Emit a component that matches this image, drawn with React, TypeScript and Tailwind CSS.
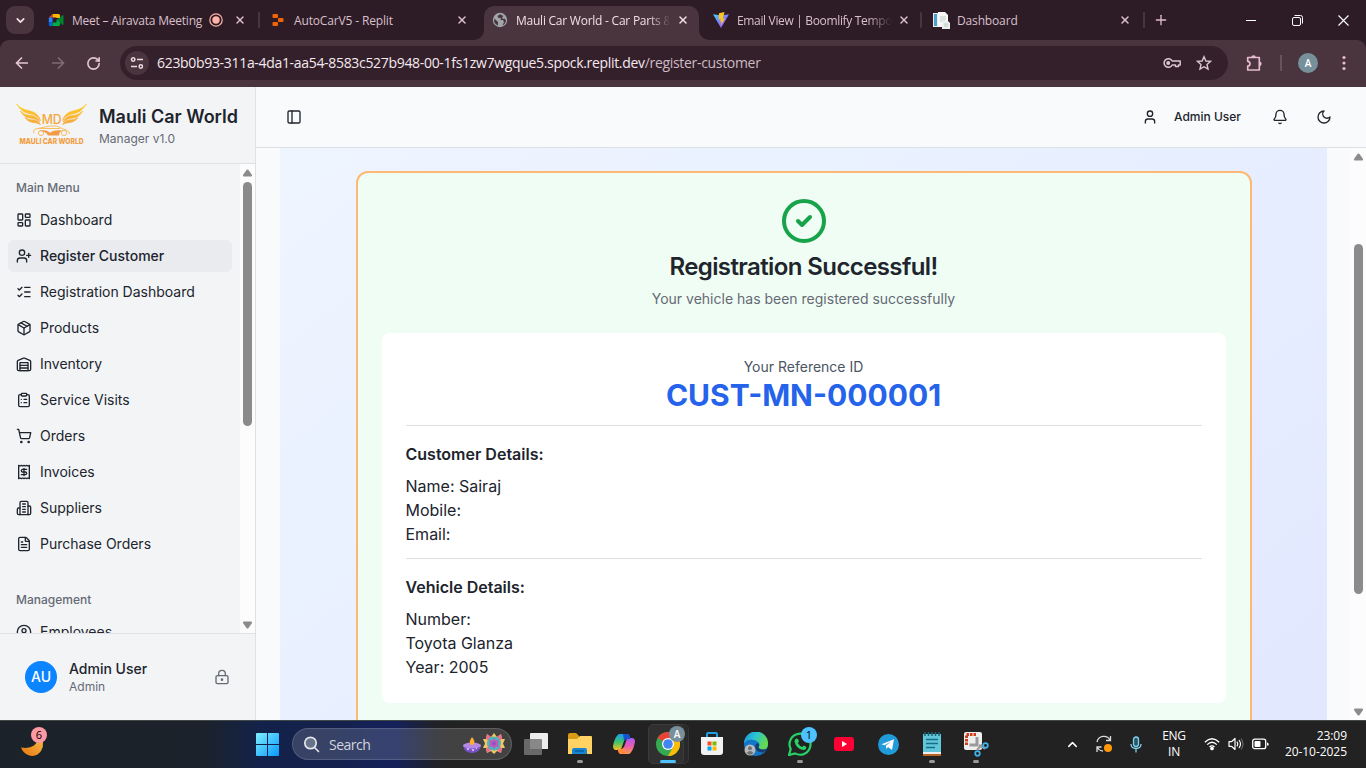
import React from "react";
import { LayoutDashboard, UserPlus, ListChecks, Package, ClipboardList, ShoppingCart, FileText, CircleUser, LockKeyhole, User, Bell, PanelLeft, CircleCheck, X, Plus, ChevronDown, ChevronUp, RotateCw } from "lucide-react";

const ui = "font-['Open_Sans','Noto_Sans',sans-serif]";

function Stroke({ size = 16, children }: { size?: number; children: React.ReactNode }) {
  return (
    <svg width={size} height={size} viewBox="0 0 24 24" fill="none" stroke="currentColor" strokeWidth="2" strokeLinecap="round" strokeLinejoin="round" className="shrink-0">
      {children}
    </svg>
  );
}

const Warehouse = () => (
  <Stroke>
    <path d="M22 8.35V20a2 2 0 0 1-2 2H4a2 2 0 0 1-2-2V8.35A2 2 0 0 1 3.26 6.5l8-3.2a2 2 0 0 1 1.48 0l8 3.2A2 2 0 0 1 22 8.35Z" />
    <path d="M6 18h12M6 14h12" />
    <rect width="12" height="12" x="6" y="10" />
  </Stroke>
);
const Receipt = () => (
  <Stroke>
    <path d="M4 2v20l2-1 2 1 2-1 2 1 2-1 2 1 2-1 2 1V2l-2 1-2-1-2 1-2-1-2 1-2-1-2 1Z" />
    <path d="M16 8h-6a2 2 0 1 0 0 4h4a2 2 0 1 1 0 4H8M12 17.5v-11" />
  </Stroke>
);
const Building = () => (
  <Stroke>
    <path d="M6 22V4a2 2 0 0 1 2-2h8a2 2 0 0 1 2 2v18Z" />
    <path d="M6 12H4a2 2 0 0 0-2 2v6a2 2 0 0 0 2 2h2M18 9h2a2 2 0 0 1 2 2v9a2 2 0 0 1-2 2h-2M10 6h4M10 10h4M10 14h4M10 18h4" />
  </Stroke>
);

/* ---------- Browser chrome ---------- */

function MeetIcon() {
  return (
    <svg width="16" height="16" viewBox="0 0 16 16">
      <path d="M4.5 2H10.5Q12 2 12 3.500V6H8.500V5.500H4.500Z" fill="#ffba00" />
      <path d="M4.5 2V5.500H.8Z" fill="#ea4335" />
      <path d="M.8 5.500H4.500V10.500H.8Z" fill="#2684fc" />
      <path d="M.8 10.500H4.500V14H2Q.8 14 .8 12.800Z" fill="#0066da" />
      <path d="M4.500 10.500H8.500V8L12 6V12.500Q12 14 10.500 14H4.500Z" fill="#00ac47" />
      <path d="M9 8L14.500 3.200Q15.500 2.800 15.500 3.800V12.200Q15.500 13.200 14.500 12.800Z" fill="#00832d" />
    </svg>
  );
}
function ReplitIcon() {
  return (
    <svg width="16" height="16" viewBox="0 0 16 16" fill="#f26207">
      <rect x="2.500" y="2" width="5.500" height="4" rx="1" />
      <rect x="8" y="6" width="5.500" height="4" rx="1" />
      <rect x="2.500" y="10" width="5.500" height="4" rx="1" />
    </svg>
  );
}
function GlobeIcon() {
  return (
    <svg width="16" height="16" viewBox="0 0 16 16">
      <circle cx="8" cy="8" r="7.200" fill="#a0a5a9" />
      <path d="M2.500 6.500L6 10v3.500Q3 12.500 2 9.500ZM8 2.200L5.500 4 6.500 6H9l-.5 2H11l1 2-1.500 3.500Q13.800 11.500 14 8L12.500 6.500 11 7 10 5.500 11.500 4Z" fill="#4a353f" />
    </svg>
  );
}
function ViteIcon() {
  return (
    <svg width="16" height="16" viewBox="0 0 16 16">
      <defs>
        <linearGradient id="vite" x1="0" y1="0" x2="1" y2="1">
          <stop offset="0" stopColor="#41d1ff" />
          <stop offset="1" stopColor="#bd34fe" />
        </linearGradient>
      </defs>
      <path d="M0 2.200L8 16 16 2.200 8.500 3.500Z" fill="url(#vite)" />
      <path d="M11.500 0L6 1.200 5.700 7.500 7.800 7 7.200 10 8.700 9.500 7.800 13.500 12 6.500 9.800 6.900Z" fill="#ffc51e" />
    </svg>
  );
}
function DocIcon() {
  return (
    <svg width="17" height="17" viewBox="0 0 17 17">
      <rect x="0" y="1" width="10" height="14" fill="#e7eef2" />
      <rect x="1" y="2" width="3" height="12" fill="#4d9fd0" />
      <path d="M5 0H12L15 3V15H5Z" fill="#f7f8f7" />
      <path d="M7 5H13M7 7H13M7 9H12" stroke="#c2cac8" />
      <path d="M9 9H15L17 11V17H9Z" fill="#eceff0" />
      <path d="M11 12H15M11 14H15" stroke="#bcc6c6" />
    </svg>
  );
}

function Tab({ icon, label, width, active, rec }: { icon: React.ReactNode; label: React.ReactNode; width: string; active?: boolean; rec?: boolean }) {
  return (
    <div className={`flex shrink-0 items-center ${width} ${active ? "relative mt-[6px] h-[34px] rounded-t-[10px] bg-[#4a353f] pb-[6px] pl-[8px] text-[#efdfe6]" : "h-[40px] text-[#d9c0cb]"}`}>
      {active && (
        <>
          <svg className="absolute -left-[10px] bottom-0" width="10" height="10"><path d="M10 0V10H0A10 10 0 0 0 10 0Z" fill="#4a353f" /></svg>
          <svg className="absolute -right-[10px] bottom-0" width="10" height="10"><path d="M0 0V10H10A10 10 0 0 1 0 0Z" fill="#4a353f" /></svg>
        </>
      )}
      <span className="w-[24px] shrink-0">{icon}</span>
      <span className="w-0 flex-1 pt-[2px] whitespace-nowrap">{label}</span>
      {rec && (
        <svg width="14" height="14" viewBox="0 0 14 14" className="mr-[11px] shrink-0">
          <circle cx="7" cy="7" r="6.200" fill="none" stroke="#ffb4a9" strokeWidth="1.200" />
          <circle cx="7" cy="7" r="3.700" fill="#ffb4a9" />
        </svg>
      )}
      <X size={12} strokeWidth={3} className="mr-[10px] shrink-0" />
    </div>
  );
}

const Divider = () => <span className="mt-[12px] h-[16px] w-[2px] shrink-0 rounded bg-[#4a353f]" />;

function Chrome() {
  return (
    <div className={`h-[87px] shrink-0 bg-[#2d1b26] ${ui}`}>
      <div className="flex h-[40px] text-[12px] tracking-[-0.15px]">
        <div className="mt-[6px] mr-[14px] ml-[6px] flex h-[28px] w-[28px] shrink-0 items-center justify-center rounded-[9px] bg-[#4a353f] text-[#f4e4ec]">
          <ChevronDown size={13} strokeWidth={3} />
        </div>
        <Tab width="w-[208px]" icon={<MeetIcon />} label={<span className="tracking-[-0.22px]">Meet – Airavata Meeting</span>} rec />
        <span className="w-[2px]" /><Divider />
        <Tab width="w-[218px] pl-[10px]" icon={<ReplitIcon />} label="AutoCarV5 - Replit" />
        <span className="w-[6px] shrink-0" />
        <Tab width="w-[215px]" active icon={<GlobeIcon />} label={<span className="tracking-[-0.24px] [mask-image:linear-gradient(90deg,#000_85%,transparent_99%)]">Mauli Car World - Car Parts &amp;</span>} />
        <Tab width="w-[221px] pl-[14px]" icon={<ViteIcon />} label={<span className="tracking-[-0.34px] [mask-image:linear-gradient(90deg,#000_84%,transparent)]">Email View | Boomlify Tempo</span>} />
        <Divider />
        <Tab width="w-[219px] pl-[11px]" icon={<DocIcon />} label="Dashboard" />
        <span className="w-[2px]" /><Divider />
        <div className="flex flex-1 items-center text-white">
          <Plus size={16} strokeWidth={2} className="ml-[8px] text-[#e0bccb]" />
          <span className="flex-1" />
          <span className="mr-[36px] h-px w-[10px] bg-white" />
          <svg width="11" height="11" viewBox="0 0 11 11" fill="none" stroke="currentColor" className="mr-[35px]">
            <rect x=".5" y="2.500" width="8" height="8" rx="1.500" />
            <path d="M2.500 .5H8.500Q10.500 .5 10.500 2.500V8.500" />
          </svg>
          <svg width="11" height="11" viewBox="0 0 11 11" stroke="currentColor" strokeWidth="1.100" className="mr-[17px]"><path d="M.5 .5L10.500 10.500M10.500 .5L.5 10.500" /></svg>
        </div>
      </div>
      <div className="flex h-[47px] items-center rounded-t-[9px] bg-[#4a353f] pb-[1px]">
        <svg width="14" height="14" viewBox="0 0 14 14" fill="none" stroke="#e5c8d4" strokeWidth="1.600" className="ml-[15px]"><path d="M13 7H2M7 1.500L1.500 7 7 12.500" /></svg>
        <svg width="14" height="14" viewBox="0 0 14 14" fill="none" stroke="#806b76" strokeWidth="1.600" className="ml-[22px]"><path d="M1 7H12M7 1.500L12.500 7 7 12.500" /></svg>
        <RotateCw size={15} strokeWidth={2.600} className="mr-[19px] ml-[21px] text-[#e5c8d4]" />
        <div className="flex h-[34px] w-[1108px] items-center rounded-full bg-[#33202a] pl-[5px]">
          <span className="flex h-[24px] w-[24px] items-center justify-center rounded-full bg-[#4a353f]">
            <svg width="14" height="14" viewBox="0 0 14 14" fill="none" stroke="#ecdbe3" strokeWidth="1.500">
              <circle cx="3.200" cy="3.500" r="1.700" /><path d="M7 3.500H13M1 10.500H7" /><circle cx="10.800" cy="10.500" r="1.700" />
            </svg>
          </span>
          <span className="ml-[8px] w-[1006px] pb-[1px] text-[14px] tracking-[-0.317px] whitespace-nowrap text-[#f5e9ef]">
            623b0b93-311a-4da1-aa54-8583c527b948-00-1fs1zw7wgque5.spock.replit.dev<span className="text-[#cdbbc4]">/register-customer</span>
          </span>
          <svg width="18" height="12" viewBox="0 0 18 12" fill="none" stroke="#dcc6d0" strokeWidth="1.500">
            <path d="M9.200 4H17.200V8H15.500V9.500H12.500V8H9.200A4.300 4.300 0 1 1 9.200 4Z" strokeLinejoin="round" /><circle cx="5.200" cy="6" r="1.200" fill="#dcc6d0" />
          </svg>
          <svg width="16" height="16" viewBox="0 0 16 16" fill="none" stroke="#dcc6d0" strokeWidth="1.400" className="ml-[15px]"><path d="M8 1.700L9.900 6 14.500 6.400 11 9.500 12 14.100 8 11.700 4 14.100 5 9.500 1.500 6.400 6.100 6Z" /></svg>
        </div>
        <svg width="17" height="17" viewBox="0 0 17 17" fill="none" stroke="#e5bccd" strokeWidth="1.700" className="ml-[18px]">
          <path d="M1.700 2.500H13.300V15H1.700V11.200Q4 11 4 8.800Q4 6.500 1.700 6.300Z" strokeLinejoin="round" /><path d="M6 2.500A1.500 1.500 0 0 1 9 2.500M13.300 7.300A1.500 1.500 0 0 1 13.300 10.300" fill="#e5bccd" />
        </svg>
        <span className="ml-[17px] h-[16px] w-[2px] bg-[#67525d]" />
        <span className="ml-[16px] flex h-[20px] w-[20px] items-center justify-center rounded-full bg-[#76909c] text-[10px] font-semibold text-white">A</span>
        <svg width="4" height="16" viewBox="0 0 4 16" fill="#e5bccd" className="ml-[24px]"><circle cx="2" cy="2.500" r="1.600" /><circle cx="2" cy="8" r="1.600" /><circle cx="2" cy="13.500" r="1.600" /></svg>
      </div>
    </div>
  );
}

/* ---------- Sidebar ---------- */

function Logo() {
  return (
    <svg width="72" height="44" viewBox="0 0 72 44" className="overflow-visible">
      <defs>
        <linearGradient id="wing" x1="0" y1="0" x2="0" y2="1">
          <stop offset="0" stopColor="#ffd21c" /><stop offset="1" stopColor="#f6a541" />
        </linearGradient>
      </defs>
      <g fill="url(#wing)" stroke="url(#wing)" strokeWidth=".7">
        <path d="M.5 1Q4 6 14 8Q22 9.500 24.500 17.500Q21 11.500 13 10.500Q6 9.500 .5 1ZM4 8Q9 12.500 15 12.500Q21 13 24 19Q20 15.500 14 15Q8 14.500 4 8ZM9 14.500Q13 17.500 18 17Q22 17.500 24.500 21.500Q21 19.500 17 19.500Q12 19 9 14.500Z" />
        <path d="M70.500 1Q67 6 57 8Q49 9.500 46.500 17.500Q50 11.500 58 10.500Q65 9.500 70.500 1ZM67 8Q62 12.500 56 12.500Q50 13 47 19Q51 15.500 57 15Q63 14.500 67 8ZM62 14.500Q58 17.500 53 17Q49 17.500 46.500 21.500Q50 19.500 54 19.500Q59 19 62 14.500Z" />
      </g>
      <text x="35.700" y="20.500" textAnchor="middle" textLength="20" lengthAdjust="spacingAndGlyphs" fontFamily="Inter" fontSize="12.500" fontWeight="500" fill="#f4a73f">MD</text>
      <g fill="none" stroke="#f8bd62" strokeWidth="1">
        <path d="M17.500 30Q17 26 22 25.500L29 24Q34 22.500 41 23L47 26Q53 27 53.500 31" />
        <path d="M23 25.500H44" />
        <circle cx="25" cy="30" r="2.600" /><circle cx="48" cy="30" r="2.600" />
      </g>
      <path d="M23 28Q31 26 34 30Q37 26.500 47 27.500Q43 28.500 43 32.500H32Q30 28 23 28Z" fill="#f39a45" />
      <text x="35.500" y="40.500" textAnchor="middle" textLength="64" lengthAdjust="spacingAndGlyphs" fontFamily="Inter" fontSize="7.800" fontWeight="800" fill="#f59c3c">MAULI CAR WORLD</text>
    </svg>
  );
}

const menu: { label: string; icon: React.ReactNode; active?: boolean }[] = [
  { label: "Dashboard", icon: <LayoutDashboard size={16} /> },
  { label: "Register Customer", icon: <UserPlus size={16} />, active: true },
  { label: "Registration Dashboard", icon: <ListChecks size={16} /> },
  { label: "Products", icon: <Package size={16} /> },
  { label: "Inventory", icon: <Warehouse /> },
  { label: "Service Visits", icon: <ClipboardList size={16} /> },
  { label: "Orders", icon: <ShoppingCart size={16} /> },
  { label: "Invoices", icon: <Receipt /> },
  { label: "Suppliers", icon: <Building /> },
  { label: "Purchase Orders", icon: <FileText size={16} /> },
];

function MenuItem({ label, icon, active }: { label: string; icon: React.ReactNode; active?: boolean }) {
  return (
    <div className={`flex h-8 shrink-0 items-center gap-2 rounded-md px-2 text-sm ${active ? "bg-[#e9ebef] font-medium" : ""}`}>
      {icon}
      <span>{label}</span>
    </div>
  );
}

const Up = () => <svg width="11" height="8" viewBox="0 0 11 8" className="shrink-0"><path d="M4.500 1Q5.500 0 6.500 1L10 6Q10.300 7.500 9 7.500H2Q.7 7.500 1 6Z" fill="#8b8b8b" /></svg>;
const Down = () => <svg width="11" height="8" viewBox="0 0 11 8" className="shrink-0"><path d="M4.500 7Q5.500 8 6.500 7L10 2Q10.300 .5 9 .5H2Q.7 .5 1 2Z" fill="#8b8b8b" /></svg>;

function Sidebar() {
  return (
    <aside className="flex w-64 shrink-0 flex-col border-r border-[#dfe1e5] bg-[#f3f4f6] text-[#20242d]">
      <div className="flex h-[77px] shrink-0 items-center gap-[11px] border-b border-[#dfe1e5] pl-4">
        <Logo />
        <div className="pb-px whitespace-nowrap">
          <div className="text-lg leading-7 font-semibold">Mauli Car World</div>
          <div className="text-xs leading-4 text-[#656a75]">Manager v1.0</div>
        </div>
      </div>
      <div className="flex h-[469px] shrink-0 overflow-hidden">
        <div className="flex flex-1 flex-col px-2 pt-2">
          <div className="flex h-8 shrink-0 items-center px-2 text-xs font-medium text-[#656a75]">Main Menu</div>
          <div className="flex flex-col gap-1">
            {menu.map((m) => <MenuItem key={m.label} {...m} />)}
          </div>
          <div className="mt-6 flex h-8 shrink-0 items-center px-2 text-xs font-medium text-[#656a75]">Management</div>
          <MenuItem label="Employees" icon={<CircleUser size={16} />} />
        </div>
        <div className="flex w-[15px] flex-col items-center bg-[#fcfcfc] pt-[5px] pb-[4px]">
          <Up />
          <div className="mt-[5px] h-[244px] w-[9px] shrink-0 rounded-full bg-[#8b8b8b]" />
          <span className="flex-1" />
          <Down />
        </div>
      </div>
      <div className="flex flex-1 items-center border-t border-[#dfe1e5] pr-[25px] pl-[25px]">
        <div className="flex h-8 w-8 items-center justify-center rounded-full bg-[#0a84ff] text-sm font-medium text-white">AU</div>
        <div className="ml-3 flex-1">
          <div className="text-sm leading-5 font-medium">Admin User</div>
          <div className="text-xs leading-4 text-[#656a75]">Admin</div>
        </div>
        <LockKeyhole size={16} className="text-[#656a75]" />
      </div>
    </aside>
  );
}

/* ---------- Main content ---------- */

function Content() {
  return (
    <div className="flex min-w-0 flex-1 flex-col bg-[#f9fafb] text-[#20242d]">
      <header className="flex h-[61px] shrink-0 items-center border-b border-[#dcdfe4] pl-[30px]">
        <PanelLeft size={16} />
        <span className="flex-1" />
        <User size={16} />
        <span className="ml-4 text-xs font-medium">Admin User</span>
        <Bell size={16} className="ml-[31px]" />
        <span className="mr-[34px] ml-[28px]"><Stroke><path d="M12 3a6 6 0 0 0 9 9 9 9 0 1 1-9-9Z" /></Stroke></span>
      </header>
      <div className="flex h-[572px] overflow-hidden">
        <div className="flex-1 pr-6 pl-6">
          <div className="-mt-[105px] h-[832px] bg-linear-to-br from-[#eff6ff] to-[#e0e7ff] pt-[128px]">
            <div className="mx-auto h-[600px] max-w-4xl rounded-xl border-2 border-[#fdb874] bg-[#f0fdf4] px-6 pt-6">
              <div className="flex flex-col items-center">
                <CircleCheck size={48} className="text-[#16a34a]" />
                <h1 className="mt-[6px] text-2xl leading-8 font-semibold tracking-[-0.6px]">Registration Successful!</h1>
                <p className="mt-[6px] text-sm leading-5 text-[#656a75]">Your vehicle has been registered successfully</p>
              </div>
              <div className="mt-6 h-[370px] rounded-lg bg-white p-6">
                <div className="border-b border-[#dcdfe4] pb-[12px] text-center">
                  <p className="text-sm leading-5 text-[#4b5563]">Your Reference ID</p>
                  <p className="text-3xl leading-9 font-bold text-[#2563eb]">CUST-MN-000001</p>
                </div>
                <div className="mt-4 border-b border-[#dcdfe4] pb-3 leading-6">
                  <h2 className="mb-2 font-semibold">Customer Details:</h2>
                  <p>Name: Sairaj</p>
                  <p>Mobile:</p>
                  <p>Email:</p>
                </div>
                <div className="mt-4 leading-6">
                  <h2 className="mb-2 font-semibold">Vehicle Details:</h2>
                  <p>Number:</p>
                  <p>Toyota Glanza</p>
                  <p>Year: 2005</p>
                </div>
              </div>
            </div>
          </div>
        </div>
        <div className="flex w-[15px] flex-col items-center bg-[#fcfcfc] pt-[5px] pb-[4px]">
          <Up />
          <div className="mt-[83px] h-[350px] w-[9px] shrink-0 rounded-full bg-[#8b8b8b]" />
          <span className="flex-1" />
          <Down />
        </div>
      </div>
    </div>
  );
}

/* ---------- Taskbar ---------- */

function TaskItem({ children, dot, active }: { children: React.ReactNode; dot?: boolean; active?: boolean }) {
  return (
    <div className="relative flex h-[48px] w-[44px] shrink-0 items-center justify-center">
      {active && <span className="absolute top-[4px] left-[4px] h-[40px] w-[39px] rounded-[5px] border border-[#363636] bg-[#292929]" />}
      {active && <span className="absolute top-[4px] left-[2px] h-[40px] w-[36px] rounded-[5px] border border-[#3b3b3b] bg-[#303030]" />}
      <span className="relative">{children}</span>
      {dot && <span className="absolute bottom-[5px] h-[3px] w-[6px] rounded-full bg-[#9a9a9a]" />}
      {active && <span className="absolute bottom-[5px] h-[3px] w-[16px] rounded-full bg-[#4cc2ff]" />}
    </div>
  );
}

function Taskbar() {
  return (
    <div className={`flex h-[48px] shrink-0 items-center bg-[linear-gradient(90deg,#1c2229_0px,#1b222b_205px,#13224a_260px,#14214c_330px,#14215a_395px,#202128_435px,#222222_455px)] text-white shadow-[inset_0_1px_0_#414747] ${ui}`}>
      <div className="relative ml-[20px] h-[32px] w-[225px]">
        <svg width="26" height="32" viewBox="0 0 26 32">
          <defs><linearGradient id="moon" x1="1" y1="0" x2="0" y2="1"><stop stopColor="#f5c04b" /><stop offset="1" stopColor="#e8750e" /></linearGradient></defs>
          <path d="M19 7Q26 15 21 23Q16 30 8 27Q3 25 1 19.500Q9 21 14 17.500Q19 13 19 7Z" fill="url(#moon)" />
        </svg>
        <span className="absolute -top-[1px] left-[11px] flex h-[16px] w-[16px] items-center justify-center rounded-full bg-[#ff99a4] text-[11px] text-black">6</span>
      </div>
      <div className="flex w-[47px] justify-center pr-[3px]">
        <svg width="23" height="23" viewBox="0 0 23 23">
          <defs><linearGradient id="win" x1="0" y1="0" x2="1" y2="1"><stop stopColor="#7ff0ff" /><stop offset="1" stopColor="#0898fb" /></linearGradient></defs>
          <path d="M0 1Q0 0 1 0H11V11H0ZM12 0H22Q23 0 23 1V11H12ZM0 12H11V23H1Q0 23 0 22ZM12 12H23V22Q23 23 22 23H12Z" fill="url(#win)" />
        </svg>
      </div>
      <div className="flex h-[32px] w-[220px] items-center rounded-full border border-white/15 bg-white/15 pl-[10px]">
        <svg width="17" height="17" viewBox="0 0 17 17" fill="none" stroke="#e2e4ea" strokeWidth="1.700"><circle cx="7.500" cy="7" r="5.700" fill="#67738a" /><path d="M11.500 11.500L15.500 15.500" strokeLinecap="round" /></svg>
        <span className="ml-[9px] flex-1 text-[14px] tracking-[-0.5px] text-[#d3d5dd]">Search</span>
        <svg width="44" height="24" viewBox="0 0 44 24" className="mr-[5px]">
          <path d="M1 13Q10 9 19 13Q18 21 10 21Q2 21 1 13Z" fill="#7953c4" />
          <ellipse cx="10" cy="13.500" rx="9" ry="3" fill="#b58ae4" />
          <path d="M10 5Q13.500 9 12 12Q10 14 8 12Q7 9 10 5Z" fill="#ffab34" />
          <path d="M5 16L6 18 7 16M10 17L11 19 12 17M14 16L15 17" stroke="#e5c5fa" fill="none" />
          <path d="M32 1L35 5 39 2 40 7 43 7 41 11.500 43 16 40 16 39 21 35 19 32 22 29 19 25 21 24 16 21 16 23 11.500 21 7 24 7 25 2 29 5Z" fill="#f4c55f" />
          <path d="M25 2L29 5 35 18 39 21 40 16 24 7ZM39 2L35 5 29 18 25 21 24 16 40 7Z" fill="#ef6c91" />
          <circle cx="32" cy="11.500" r="7" fill="#44b8ba" />
          <path d="M32 6L34 8.500 37 8 36 11.500 37 15 34 14.500 32 17 30 14.500 27 15 28 11.500 27 8 30 8.500Z" fill="#c05ab9" />
          <circle cx="32" cy="11.500" r="2" fill="#8b55c8" />
        </svg>
      </div>
      <span className="w-[2px]" />
      <TaskItem>
        <svg width="24" height="22" viewBox="0 0 24 22"><path d="M7 0H23Q24 0 24 1V16H6V1Q6 0 7 0Z" fill="#eeeeee" /><rect y="6" width="18" height="16" rx="1" fill="#757575" fillOpacity=".85" /></svg>
      </TaskItem>
      <TaskItem dot>
        <svg width="26" height="24" viewBox="0 0 26 24">
          <path d="M1 3Q1 1 3 1H9L12 4V10H1Z" fill="#d99b14" /><path d="M1 7H10L13 4H24Q25 4 25 5V22H1Z" fill="#ffd263" />
          <path d="M5 22V18Q5 16 7 16H18Q20 16 20 18V22Z" fill="#1686d0" /><path d="M8 19H17" stroke="#0a5a9c" strokeWidth="1.500" />
        </svg>
      </TaskItem>
      <TaskItem>
        <svg width="24" height="24" viewBox="0 0 24 24">
          <defs>
            <linearGradient id="ca" x1="0" y1="0" x2="0" y2="1"><stop stopColor="#1c9df5" /><stop offset=".5" stopColor="#3cc36b" /><stop offset="1" stopColor="#ffc21d" /></linearGradient>
            <linearGradient id="cb" x1="0" y1="0" x2="0" y2="1"><stop stopColor="#a65cf2" /><stop offset=".5" stopColor="#e95bb0" /><stop offset="1" stopColor="#ff9a47" /></linearGradient>
          </defs>
          <path d="M7 2H15Q17 2 17.500 4L18.300 7H15Q12.500 7 12 9L9.500 16Q9 18 6 18H4Q1 18 1 14Q3 4 7 2Z" fill="url(#ca)" />
          <path d="M17 22H9Q7 22 6.500 20L5.700 17H9Q11.500 17 12 15L14.500 8Q15 6 18 6H20Q23 6 23 10Q21 20 17 22Z" fill="url(#cb)" />
          <path d="M11 2H15Q17 2 17.500 4L18.300 7H15Q12.500 7 12 9Z" fill="#1553d4" />
          <path d="M13 22H9Q7 22 6.500 20L5.700 17H9Q11.500 17 12 15Z" fill="#ff8a3c" />
        </svg>
      </TaskItem>
      <TaskItem active>
        <span className="relative block h-[24px] w-[24px]">
          <svg width="24" height="24" viewBox="0 0 24 24">
            <circle cx="12" cy="12" r="12" fill="#34a853" />
            <path d="M12 12L1.600 6A12 12 0 0 1 22.400 6Z" fill="#ea4335" />
            <path d="M12 6H22.400A12 12 0 0 1 12 24L17.200 15Z" fill="#fbbc05" />
            <circle cx="12" cy="12" r="6" fill="#fff" /><circle cx="12" cy="12" r="4.800" fill="#4285f4" />
          </svg>
          <span className="absolute -top-[6px] left-[13px] flex h-[16px] w-[16px] items-center justify-center rounded-full bg-[#78909c] text-[10px] font-semibold">A</span>
        </span>
      </TaskItem>
      <TaskItem>
        <svg width="24" height="24" viewBox="0 0 24 24">
          <path d="M7 6V2Q7 1 8 1H16Q17 1 17 2V6" fill="none" stroke="#1f9fe4" strokeWidth="2" /><path d="M1 5H23V20Q23 23 20 23H4Q1 23 1 20Z" fill="#f1f2f3" />
          <path d="M7.500 9.500h4v4h-4z" fill="#f25022" /><path d="M12.500 9.500h4v4h-4z" fill="#7fba00" /><path d="M7.500 14.500h4v4h-4z" fill="#00a4ef" /><path d="M12.500 14.500h4v4h-4z" fill="#ffb900" />
        </svg>
      </TaskItem>
      <TaskItem>
        <svg width="24" height="24" viewBox="0 0 24 24">
          <defs><linearGradient id="edge" x1="0" y1="0" x2="1" y2=".4"><stop stopColor="#1b8bd8" /><stop offset=".5" stopColor="#2bc5d4" /><stop offset="1" stopColor="#63da4c" /></linearGradient></defs>
          <circle cx="12" cy="12" r="12" fill="#1377c9" />
          <path d="M0 11A12 12 0 0 1 24 12Q24 17 19 17.500Q14 17.500 14.500 15Q17 12 13.500 9.500Q6 5 0 11Z" fill="url(#edge)" />
          <path d="M14.500 15Q15 18.500 23.500 17Q22 19 19 20.500Q11 20 11 15Q11 12 13.500 11Q16 12 14.500 15Z" fill="#173e70" />
          <circle cx="6" cy="18" r="5.500" fill="#b8bbbd" /><circle cx="6" cy="16.300" r="2" fill="#6d7275" /><path d="M2.500 21Q6 17 9.500 21Q6 24.500 2.500 21Z" fill="#6d7275" />
        </svg>
      </TaskItem>
      <TaskItem dot>
        <span className="relative block h-[24px] w-[24px]">
          <svg width="24" height="24" viewBox="0 0 24 24">
            <path d="M1 23L2.700 17A10.500 10.500 0 1 1 7 21.400Z" fill="#222" stroke="#25d366" strokeWidth="2.200" />
            <path d="M8 6.500L10 7 11 9.500 9.800 11Q11.500 14 14.200 15L15.800 13.600 18.500 15Q18 18.500 15 18Q8 16.500 6.500 9.500Q6.500 7.500 8 6.500Z" fill="#25d366" />
          </svg>
          <span className="absolute -top-[5px] left-[13px] flex h-[16px] w-[16px] items-center justify-center rounded-full bg-[#4cc2ff] text-[11px] text-black">1</span>
        </span>
      </TaskItem>
      <TaskItem><svg width="20" height="14" viewBox="0 0 20 14"><rect width="20" height="14" rx="3" fill="#ff0033" /><path d="M8 4L13 7 8 10Z" fill="#fff" /></svg></TaskItem>
      <TaskItem>
        <svg width="21" height="21" viewBox="0 0 21 21"><circle cx="10.500" cy="10.500" r="10.500" fill="#219bd7" /><path d="M3.500 10.300L16 5.300 14 16 10 13 8.500 15 7.800 11.700 13 7.500 6.500 11.300Z" fill="#fff" /></svg>
      </TaskItem>
      <TaskItem dot>
        <svg width="20" height="25" viewBox="0 0 20 25"><path d="M1 2H19V21H1Z" fill="#61c6da" /><path d="M1 21H19V24H1Z" fill="#b96321" /><path d="M1 20H19V22H1Z" fill="#eee" /><path d="M3 0V4M6.500 0V4M10 0V4M13.500 0V4M17 0V4" stroke="#17667a" strokeWidth="1.500" /><path d="M4 7.500H16M4 11.500H16M4 15.500H13" stroke="#176f86" strokeWidth="1.600" /></svg>
      </TaskItem>
      <TaskItem dot>
        <svg width="26" height="26" viewBox="0 0 26 26">
          <rect x="1" y="1" width="18" height="18" rx="2" fill="#eee" /><path d="M3.500 14V3.500H14" fill="none" stroke="#cf3d17" strokeWidth="3" strokeDasharray="2.500 1" /><path d="M6.500 14H14V6" fill="none" stroke="#999" strokeWidth="3" />
          <path d="M14 19L19 13.500M16 14L22 18" stroke="#999" strokeWidth="2" /><circle cx="22.500" cy="14.500" r="2.300" fill="none" stroke="#3eb3ef" strokeWidth="1.700" /><circle cx="14.500" cy="22.500" r="2.300" fill="none" stroke="#3eb3ef" strokeWidth="1.700" />
        </svg>
      </TaskItem>
      <span className="flex-1" />
      <ChevronUp size={15} strokeWidth={2.300} />
      <svg width="18" height="18" viewBox="0 0 18 18" className="ml-[15px]" fill="none" stroke="#ddd" strokeWidth="1.300">
        <path d="M2 7A7 7 0 0 1 15 5M15.500 1V5.500H11M2 17V12H6.500M2.500 12.500Q4.500 16 8 16" /><circle cx="13" cy="13" r="4" fill="#ff9809" stroke="none" />
      </svg>
      <svg width="12" height="17" viewBox="0 0 12 17" fill="none" stroke="#80d2ef" strokeWidth="1.300" className="ml-[17px]"><rect x="3.500" y="1" width="5" height="9.500" rx="2.500" fill="#27596a" /><path d="M1 8Q1 12.500 6 12.500T11 8M6 12.500V16.500" /></svg>
      <div className="ml-[20px] w-[24px] text-center text-[12px] leading-[16px] tracking-[-0.3px]">ENG<br />IN</div>
      <svg width="16" height="14" viewBox="0 0 16 14" fill="none" stroke="#fff" strokeWidth="1.300" className="ml-[18px]"><path d="M.8 5.200Q8-1.800 15.200 5.200M3.200 7.600Q8 3 12.800 7.600M5.500 10Q8 7.700 10.500 10" /><circle cx="8" cy="11.500" r="1.200" fill="#fff" /></svg>
      <svg width="16" height="14" viewBox="0 0 16 14" fill="none" stroke="#fff" strokeWidth="1.200" className="ml-[8px]"><path d="M1 4.700H3.500L7 1.500V12.500L3.500 9.300H1Z" strokeLinejoin="round" /><path d="M9 4.700Q10.500 7 9 9.300M11 3Q14 7 11 11" /><path d="M13 1.500Q17 7 13 12.500" stroke="#666" /></svg>
      <svg width="17" height="12" viewBox="0 0 17 12" className="ml-[8px]"><rect x=".7" y="1.200" width="13" height="9.500" rx="2" fill="none" stroke="#fff" strokeWidth="1.300" /><rect x="2.500" y="3" width="6" height="6" rx="1" fill="#fff" /><path d="M15 4.500Q17 4.500 16.500 7.500H15Z" fill="#fff" /></svg>
      <div className="mr-[19px] w-[78px] text-right text-[12px] leading-[16px] tracking-[-0.05px]">23:09<br />20-10-2025</div>
    </div>
  );
}

export default function App() {
  return (
    <div className="flex h-[768px] w-[1366px] flex-col overflow-hidden font-['Inter',sans-serif]">
      <Chrome />
      <div className="flex h-[633px] shrink-0">
        <Sidebar />
        <Content />
      </div>
      <Taskbar />
    </div>
  );
}
